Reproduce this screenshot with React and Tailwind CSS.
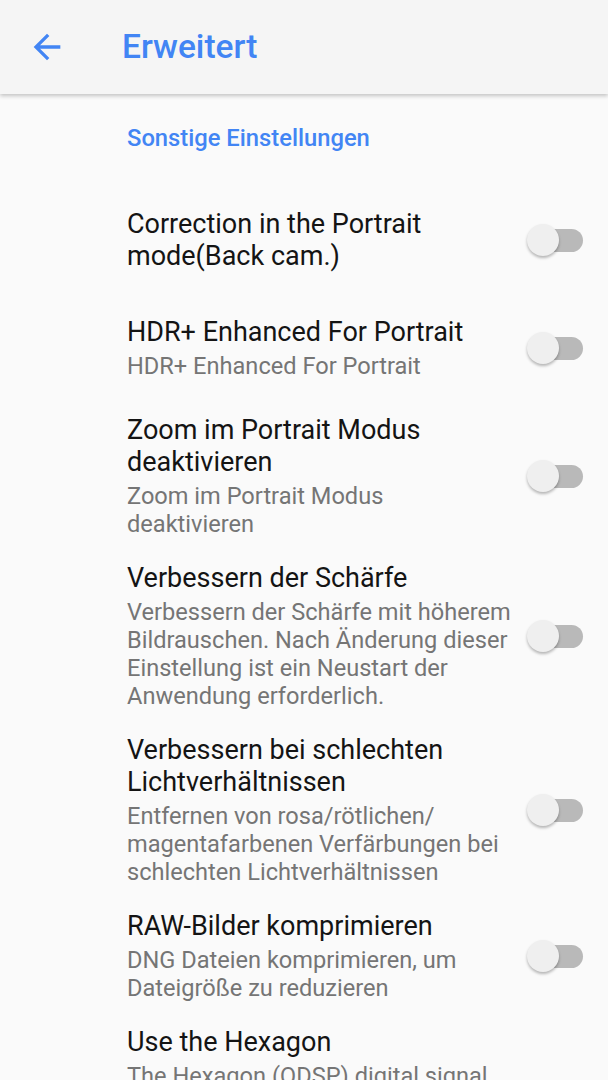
import { useState } from "react";

const settings = [
    { title: "Correction in the Portrait mode(Back cam.)" },
    { title: "HDR+ Enhanced For Portrait", summary: "HDR+ Enhanced For Portrait" },
    { title: "Zoom im Portrait Modus deaktivieren", summary: "Zoom im Portrait Modus deaktivieren" },
    {
        title: "Verbessern der Schärfe",
        summary: "Verbessern der Schärfe mit höherem Bildrauschen. Nach Änderung dieser Einstellung ist ein Neustart der Anwendung erforderlich.",
    },
    {
        title: "Verbessern bei schlechten Lichtverhältnissen",
        summary: (
            <>
                Entfernen von rosa/rötlichen/<wbr />magentafarbenen Verfärbungen bei schlechten Lichtverhältnissen
            </>
        ),
    },
    { title: "RAW-Bilder komprimieren", summary: "DNG Dateien komprimieren, um Dateigröße zu reduzieren" },
    {
        title: "Use the Hexagon",
        summary:
            "The Hexagon (QDSP) digital signal processor is used for HDR+ image processing. Disabling it makes processing slower and uses more CPU.",
    },
];

function Toggle({ on, onClick }) {
    return (
        <button onClick={onClick} className="relative w-[57px] h-[34px] shrink-0 flex items-center justify-end">
            <span className={`w-[54px] h-[23px] rounded-full ${on ? "bg-[#a8c7fa]" : "bg-[#b9b9b9]"}`} />
            <span
                className={`absolute top-[1px] w-[32px] h-[32px] rounded-full shadow-[0_2px_3px_rgba(0,0,0,0.28)] ${
                    on ? "right-0 bg-[#4285f4]" : "left-[1px] bg-[#efefef]"
                }`}
            />
        </button>
    );
}

function SettingRow({ title, summary }) {
    const [on, setOn] = useState(false);
    return (
        <div className="flex items-center min-h-[108px] py-3 pl-[127px] pr-[25px]">
            <div className="w-[386px] flex flex-col gap-1">
                <div className="text-[27px] leading-[32px] text-[#141414]">{title}</div>
                {summary && <div className="text-[23.6px] leading-[28px] text-[#757575]">{summary}</div>}
            </div>
            <div className="ml-auto">
                <Toggle on={on} onClick={() => setOn(!on)} />
            </div>
        </div>
    );
}

export default function App() {
    return (
        <div className="w-[608px] h-[1080px] overflow-hidden bg-[#fafafa]" style={{ fontFamily: "Roboto, 'Noto Sans', sans-serif" }}>
            {/* App bar */}
            <div className="relative z-10 h-[94px] flex items-center bg-[#f5f5f5] shadow-[0_2px_4px_rgba(0,0,0,0.22)]">
                <button className="ml-[27px] w-[40px] h-[40px] flex items-center justify-center text-[#4285f4]">
                    <svg viewBox="0 0 24 24" width="40" height="40" fill="currentColor">
                        <path d="M20 11H7.83l5.59-5.59L12 4l-8 8 8 8 1.41-1.41L7.83 13H20v-2z" />
                    </svg>
                </button>
                <h1 className="ml-[55px] text-[33.5px] font-medium text-[#4285f4]">Erweitert</h1>
            </div>

            {/* Section header */}
            <div className="pl-[127px] pt-[30px] pb-[34px]">
                <div className="text-[23.75px] leading-[28px] font-medium text-[#4285f4]">Sonstige Einstellungen</div>
            </div>

            {settings.map((s, i) => (
                <SettingRow key={i} title={s.title} summary={s.summary} />
            ))}
        </div>
    );
}
